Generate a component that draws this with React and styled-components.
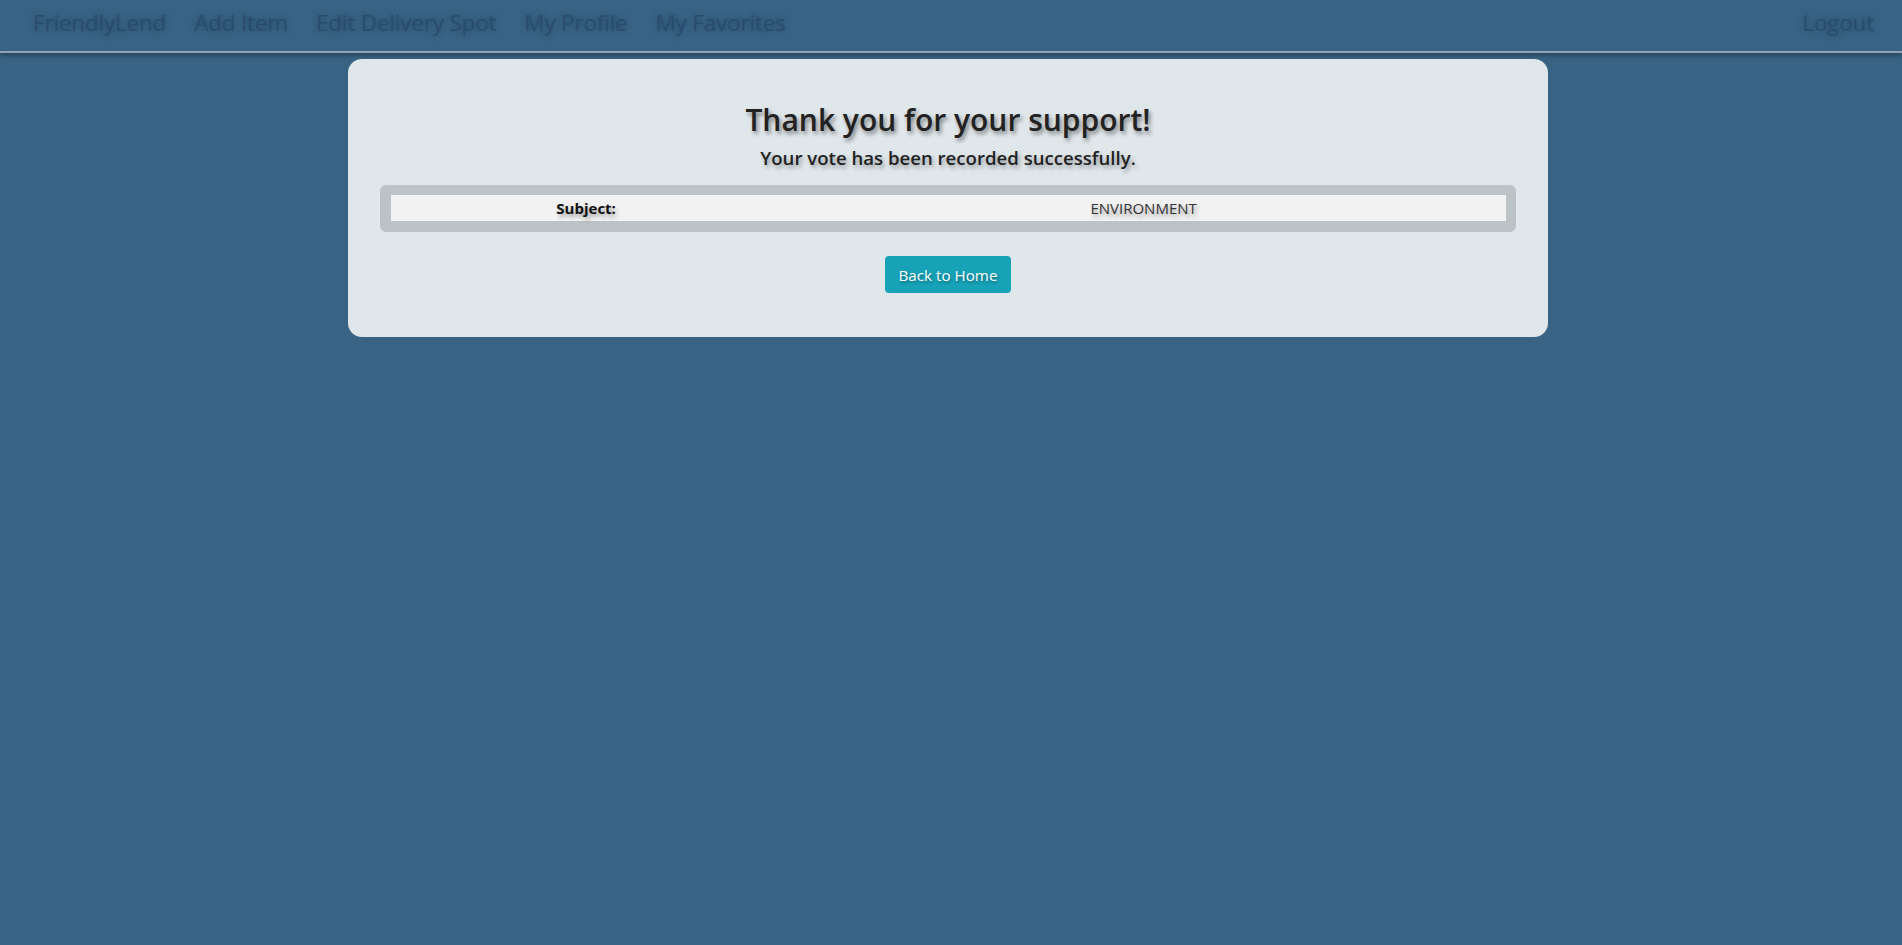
import styled, { createGlobalStyle } from 'styled-components';

const GlobalStyle = createGlobalStyle`
  html, body {
    margin: 0;
    padding: 0;
    background-color: #386384;
    font-family: 'Segoe UI', 'Open Sans', sans-serif;
    min-height: 100%;
  }
`;

const navLinks = ['FriendlyLend', 'Add Item', 'Edit Delivery Spot', 'My Profile', 'My Favorites'];

export default function App() {
  return (
    <>
      <GlobalStyle />
      <Page>
        <Nav>
          <NavGroup>
            {navLinks.map((label) => (
              <NavLink key={label}>{label}</NavLink>
            ))}
          </NavGroup>
          <NavLink>Logout</NavLink>
        </Nav>

        <Card>
          <Title>Thank you for your support!</Title>
          <Subtitle>Your vote has been recorded successfully.</Subtitle>

          <TableBox>
            <DetailsTable>
              <tbody>
                <tr>
                  <LabelCell>Subject:</LabelCell>
                  <ValueCell>ENVIRONMENT</ValueCell>
                </tr>
              </tbody>
            </DetailsTable>
          </TableBox>

          <HomeButton>Back to Home</HomeButton>
        </Card>
      </Page>
    </>
  );
}

const Page = styled.div`
  min-height: 945px;
  background-color: #386384;
`;

const Nav = styled.nav`
  height: 51px;
  display: flex;
  align-items: center;
  justify-content: space-between;
  padding: 0 14px 0 19px;
  border-bottom: 2px solid #8fa3b5;
  box-shadow: 0 3px 4px rgba(20, 40, 60, 0.45);
`;

const NavGroup = styled.div`
  display: flex;
  align-items: center;
`;

const NavLink = styled.a`
  padding: 0 14px;
  font-size: 22.5px;
  letter-spacing: -0.2px;
  color: #2a4b70;
  text-shadow: 0 0 6px rgba(10, 25, 45, 0.35);
  cursor: pointer;
  line-height: 1;
  margin-top: -4px;
`;

const Card = styled.main`
  width: 1200px;
  box-sizing: border-box;
  margin: 6px auto 0 348px;
  padding: 41px 32px 44px;
  background-color: #e0e7eb;
  border-radius: 14px;
  display: flex;
  flex-direction: column;
  align-items: center;
`;

const Title = styled.h1`
  margin: 0;
  font-size: 30px;
  font-weight: 600;
  line-height: 39px;
  color: #222;
  text-shadow: 2px 3px 4px rgba(0, 0, 0, 0.45);
`;

const Subtitle = styled.h2`
  margin: 6px 0 14px;
  font-size: 18.6px;
  font-weight: 600;
  line-height: 26px;
  color: #222;
  text-shadow: 2px 3px 4px rgba(0, 0, 0, 0.35);
`;

const TableBox = styled.div`
  width: 100%;
  box-sizing: border-box;
  padding: 10px 10px 11px 11px;
  background-color: #bcc3c7;
  border-radius: 6px;
`;

const DetailsTable = styled.table`
  width: 100%;
  border-collapse: collapse;
`;

const Cell = styled.td`
  background-color: #f2f2f2;
  height: 26px;
  padding: 0 8px;
  text-align: center;
  font-size: 15px;
  color: #333;
  text-shadow: 2px 3px 4px rgba(0, 0, 0, 0.35);
`;

const LabelCell = styled(Cell)`
  width: 35%;
  font-weight: 700;
  color: #111;
`;

const ValueCell = styled(Cell)``;

const HomeButton = styled.button`
  margin-top: 24px;
  height: 37px;
  width: 126px;
  border: none;
  border-radius: 4px;
  background-color: #17a2b8;
  color: #fff;
  font-family: inherit;
  font-size: 15.2px;
  text-shadow: 1px 2px 3px rgba(0, 0, 0, 0.35);
  cursor: pointer;
`;
